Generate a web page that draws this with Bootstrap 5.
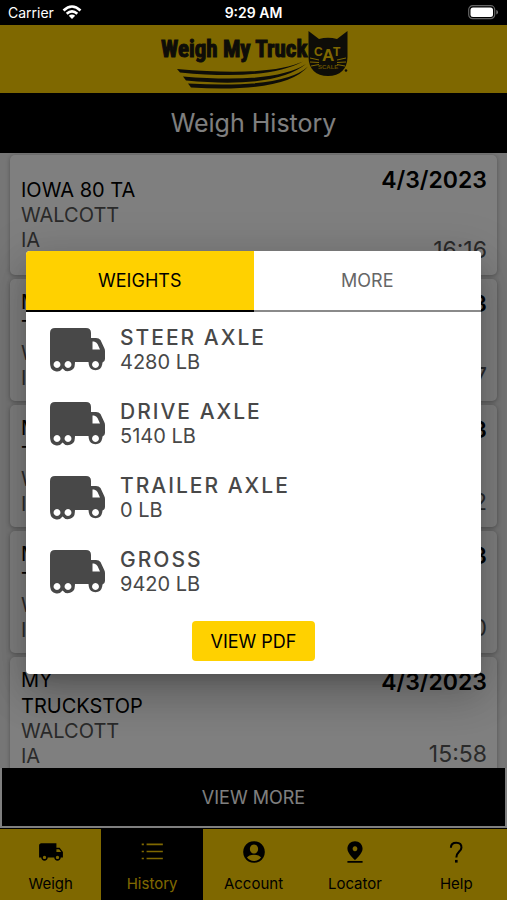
<!DOCTYPE html>
<html lang="en">
<head>
<meta charset="utf-8">
<meta name="viewport" content="width=device-width, initial-scale=1">
<title>Weigh My Truck</title>
<link href="https://cdn.jsdelivr.net/npm/bootstrap@5.3.0/dist/css/bootstrap.min.css" rel="stylesheet">
<style>
  :root { --brand: #ffd100; }
  body { font-family: Inter, "Liberation Sans", sans-serif; background: #fff; color: #000; }
  .status-strip { height: 25px; font-size: 14px; z-index: 1060; }
  .status-strip .side-slot { flex: 1 1 0; }
  .brand-bar { background: var(--brand); height: 68px; }
  .brand-bar svg { width: 190px; height: 60px; }
  .page-title { height: 60px; font-size: 25px; }
  .history-list { background: #ececec; padding: 2px 10px 0; gap: 4px; }
  .weigh-entry { flex: none; min-height: 120px; padding: 10px 10px 10px 11px; border-radius: 5px; background: #fff; box-shadow: 0 1px 4px rgba(0,0,0,.3); }
  .stop-name { font-size: 20px; line-height: 26px; width: 130px; }
  .stop-place { font-size: 20px; line-height: 25px; color: #555; }
  .entry-date, .entry-time { font-size: 23px; line-height: 30px; }
  .entry-date { font-weight: 600; }
  .entry-time { color: #555; }
  .more-btn { margin: 0 2px 2px; height: 58px; font-size: 18px; background: #000; color: #fff; border: 0; }
  .tab-strip { border-top: 1px solid #000; background: var(--brand); height: 72px; }
  .tab-strip a { flex: 1 1 0; color: #000; font-size: 15px; line-height: 20px; padding: 10px 0 6px; }
  .tab-strip a.active { background: #000; color: var(--brand); }
  .tab-strip svg { width: 26px; height: 26px; }
  .shade { top: 25px; background: rgba(0,0,0,.5); padding: 0 26px; z-index: 1050; }
  .weights-dialog { background: #fff; border-radius: 4px; color: #484848; box-shadow: 0 11px 15px -7px rgba(0,0,0,.2), 0 24px 38px 3px rgba(0,0,0,.14), 0 9px 46px 8px rgba(0,0,0,.12); padding-bottom: 13px; }
  .dialog-tab { flex: 1 1 0; height: 61px; font-size: 18px; border: 0; border-bottom: 2px solid #8a8a8a; background: #fff; color: #666; }
  .dialog-tab.active { background: var(--brand); color: #000; border-color: #000; }
  .axle-list { padding: 13px 24px 0; gap: 24px; }
  .axle-list svg { width: 56px; height: 44px; margin-top: 3px; }
  .axle-row { gap: 14px; font-size: 20px; line-height: 25px; }
  .axle-name { font-weight: 500; letter-spacing: 2px; font-size: 21px; }
  .pdf-btn { background: var(--brand); color: #000; border: 0; border-radius: 4px; font-size: 18px; height: 40px; padding: 0 19px; margin-top: 24px; }
</style>
</head>
<body>
<svg class="d-none" aria-hidden="true">
  <symbol id="truck" viewBox="0 0 56 44">
    <path fill="currentColor" fill-rule="evenodd" d="M5 0H36Q41 0 41 5V10H46Q49 10 50.500 12L54 19.500Q55 21 55 23V31Q55 33.500 52.500 34.500L52.200 36.500A6.800 6.800 0 0 1 38.800 36.500L38.500 34H25L24.800 36.500A6.800 6.800 0 0 1 12.600 40.500A6.800 6.800 0 0 1 .3 37.500Q0 36 0 33V5Q0 0 5 0ZM42.500 13.500V21.500H50L47.500 16Q46.500 14 44 13.500ZM7 33a3.400 3.500 0 1 0 .01 0ZM18 33a3.400 3.500 0 1 0 .01 0ZM45.500 33a3.400 3.500 0 1 0 .01 0Z"/>
  </symbol>
</svg>

<div class="d-flex flex-column vh-100 overflow-hidden position-relative">
  <div class="status-strip flex-shrink-0 d-flex align-items-center bg-black text-white px-2 position-relative">
    <div class="side-slot d-flex align-items-center gap-2">
      <span>Carrier</span>
      <svg width="20" height="15" viewBox="0 0 20 15" fill="none" stroke="#fff" stroke-width="2.600" aria-label="Wi-Fi"><path d="M1.500 5.500Q10-2.500 18.500 5.500M4.700 8.800Q10 4 15.300 8.800"/><path d="M6.800 10.800Q10 8 13.200 10.800L10 14Z" fill="#fff" stroke="none"/></svg>
    </div>
    <span class="fw-semibold">9:29 AM</span>
    <div class="side-slot d-flex justify-content-end">
      <svg width="31" height="15" viewBox="0 0 31 15" aria-label="Battery"><rect x=".7" y=".7" width="26" height="13" rx="4" fill="none" stroke="#666" stroke-width="1.200"/><rect x="2.500" y="2.500" width="22.500" height="9.500" rx="2.500" fill="#fff"/><path d="M28.300 5Q30 5.500 30 7.200T28.300 9.500Z" fill="#777"/></svg>
    </div>
  </div>

  <header class="brand-bar flex-shrink-0 d-flex justify-content-center align-items-center">
    <svg viewBox="0 0 190 60" fill="#1d1a10" aria-label="Weigh My Truck, CAT Scale">
      <text x="2" y="28" font-family="'Liberation Sans Narrow','Roboto Condensed','Liberation Sans',sans-serif" font-weight="700" font-size="23" stroke="#1d1a10" stroke-width="1">Weigh My Truck</text>
      <path d="M18 40Q110 48 144 32.500Q108 52 21 43.500ZM24 47.500Q116 55 147 35Q116 60 27 51.500ZM29 54.500Q125 60 149 37.500Q127 64 32 58.500Z"/>
      <path d="M149.500 2L160 10Q169 7.500 178 10L188.500 2V28C188.500 40 181 47 169 47S149.500 40 149.500 28Z"/>
      <g fill="#ffd100" font-family="'Liberation Sans',sans-serif" font-weight="700"><text x="155" y="27" font-size="12">C</text><text x="163" y="32" font-size="17">A</text><text x="174" y="27" font-size="12">T</text><text x="159" y="40" font-size="6" fill="#c79f00">SCALE</text></g>
      <path d="M151 29L160 31M151 33L160 33.500M152 37L160 35.500M187 29L178 31M187 33L178 33.500M186 37L178 35.500" stroke="#ffd100" stroke-width="1"/>
      <circle cx="187" cy="41.500" r="1.300"/>
    </svg>
  </header>

  <h1 class="page-title flex-shrink-0 bg-black text-white fw-normal m-0 d-flex justify-content-center align-items-center">Weigh History</h1>

  <main class="history-list flex-grow-1 overflow-hidden d-flex flex-column">
    <article class="weigh-entry d-flex justify-content-between">
      <div class="align-self-center"><div class="stop-name">IOWA 80 TA</div><div class="stop-place">WALCOTT<br>IA</div></div>
      <div class="d-flex flex-column justify-content-between text-end"><span class="entry-date">4/3/2023</span><span class="entry-time">16:16</span></div>
    </article>
    <article class="weigh-entry d-flex justify-content-between">
      <div class="align-self-center"><div class="stop-name">MY TRUCKSTOP</div><div class="stop-place">WALCOTT<br>IA</div></div>
      <div class="d-flex flex-column justify-content-between text-end"><span class="entry-date">4/3/2023</span><span class="entry-time">16:07</span></div>
    </article>
    <article class="weigh-entry d-flex justify-content-between">
      <div class="align-self-center"><div class="stop-name">MY TRUCKSTOP</div><div class="stop-place">WALCOTT<br>IA</div></div>
      <div class="d-flex flex-column justify-content-between text-end"><span class="entry-date">4/3/2023</span><span class="entry-time">16:02</span></div>
    </article>
    <article class="weigh-entry d-flex justify-content-between">
      <div class="align-self-center"><div class="stop-name">MY TRUCKSTOP</div><div class="stop-place">WALCOTT<br>IA</div></div>
      <div class="d-flex flex-column justify-content-between text-end"><span class="entry-date">4/3/2023</span><span class="entry-time">16:00</span></div>
    </article>
    <article class="weigh-entry d-flex justify-content-between">
      <div class="align-self-center"><div class="stop-name">MY TRUCKSTOP</div><div class="stop-place">WALCOTT<br>IA</div></div>
      <div class="d-flex flex-column justify-content-between text-end"><span class="entry-date">4/3/2023</span><span class="entry-time">15:58</span></div>
    </article>
  </main>

  <button type="button" class="more-btn flex-shrink-0">VIEW MORE</button>

  <nav class="tab-strip flex-shrink-0 d-flex text-center" aria-label="Main">
    <a href="#weigh" class="d-flex flex-column align-items-center justify-content-between text-decoration-none">
      <svg viewBox="0 0 24 24" fill="currentColor"><path d="M20 8h-3V4H3c-1.100 0-2 .9-2 2v11h2c0 1.660 1.340 3 3 3s3-1.340 3-3h6c0 1.660 1.340 3 3 3s3-1.340 3-3h2v-5l-3-4zM6 18.500c-.83 0-1.500-.67-1.500-1.500s.67-1.500 1.500-1.500 1.500.67 1.500 1.500-.67 1.500-1.500 1.500zm13.500-9l1.960 2.500H17V9.500h2.500zm-1.500 9c-.83 0-1.500-.67-1.500-1.500s.67-1.500 1.500-1.500 1.500.67 1.500 1.500-.67 1.500-1.500 1.500z"/></svg>Weigh</a>
    <a href="#history" class="active d-flex flex-column align-items-center justify-content-between text-decoration-none" aria-current="page">
      <svg viewBox="0 0 24 24" fill="none" stroke="currentColor" stroke-width="1.500"><path d="M7 5H22M7 11.500H22M7 18H22M2.500 5H4.500M2.500 11.500H4.500M2.500 18H4.500"/></svg>History</a>
    <a href="#account" class="d-flex flex-column align-items-center justify-content-between text-decoration-none">
      <svg viewBox="0 0 24 24" fill="currentColor"><path fill-rule="evenodd" d="M12 2a10 10 0 1 0 .01 0ZM12 5a3.800 4.200 0 1 1-.01 0ZM12 14.500Q17 14.800 18.500 17Q16 20.200 12 20.200T5.500 17Q7 14.800 12 14.500Z"/></svg>Account</a>
    <a href="#locator" class="d-flex flex-column align-items-center justify-content-between text-decoration-none">
      <svg viewBox="0 0 24 24" fill="currentColor"><path fill-rule="evenodd" d="M19 9c0-4.200-3.100-7-7-7S5 4.800 5 9c0 4.500 7 10.500 7 10.500S19 13.500 19 9ZM12 6.800a2.200 2.200 0 1 1-.01 0ZM5 20.300H19V22H5Z"/></svg>Locator</a>
    <a href="#help" class="d-flex flex-column align-items-center justify-content-between text-decoration-none">
      <svg viewBox="0 0 24 24" fill="none" stroke="currentColor" stroke-width="1.900"><path d="M7.300 8Q7.300 3.500 12.300 3.500T17 8C17 11.500 12.300 12 12.300 17"/><path d="M12.300 19.300V21.800" stroke-width="2.400"/></svg>Help</a>
  </nav>

  <div class="shade position-absolute start-0 end-0 bottom-0 d-flex align-items-center">
    <section class="weights-dialog w-100 overflow-hidden" role="dialog" aria-label="Weights">
      <div class="d-flex" role="tablist">
        <button type="button" class="dialog-tab active" role="tab" aria-selected="true">WEIGHTS</button>
        <button type="button" class="dialog-tab" role="tab" aria-selected="false">MORE</button>
      </div>
      <div class="axle-list d-flex flex-column">
        <div class="axle-row d-flex"><svg aria-hidden="true"><use href="#truck"/></svg><div><div class="axle-name">STEER AXLE</div><div>4280 LB</div></div></div>
        <div class="axle-row d-flex"><svg aria-hidden="true"><use href="#truck"/></svg><div><div class="axle-name">DRIVE AXLE</div><div>5140 LB</div></div></div>
        <div class="axle-row d-flex"><svg aria-hidden="true"><use href="#truck"/></svg><div><div class="axle-name">TRAILER AXLE</div><div>0 LB</div></div></div>
        <div class="axle-row d-flex"><svg aria-hidden="true"><use href="#truck"/></svg><div><div class="axle-name">GROSS</div><div>9420 LB</div></div></div>
      </div>
      <div class="text-center"><button type="button" class="pdf-btn">VIEW PDF</button></div>
    </section>
  </div>
</div>
<script src="https://cdn.jsdelivr.net/npm/bootstrap@5.3.0/dist/js/bootstrap.bundle.min.js"></script>
</body>
</html>
